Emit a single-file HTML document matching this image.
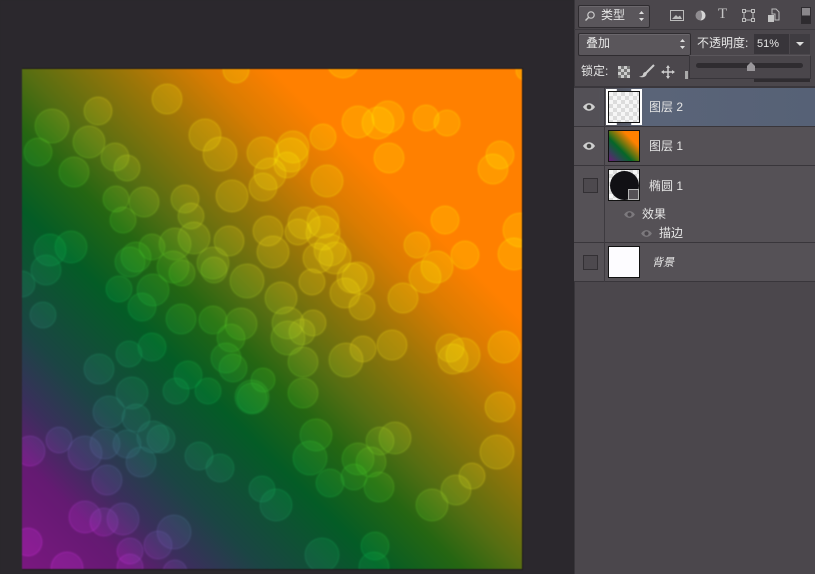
<!DOCTYPE html>
<html><head><meta charset="utf-8">
<style>
html,body{margin:0;padding:0;width:815px;height:574px;overflow:hidden;background:#2b282d}
body{position:relative;font-family:"Liberation Sans","Noto Sans CJK SC",sans-serif;color:#eee}
.abs,.abs *{box-sizing:border-box}
.abs{position:absolute}
#panel{position:absolute;left:574px;top:0;width:241px;height:574px;background:#4b474c;overflow:hidden}
.t{position:absolute;white-space:nowrap;font-size:12px;line-height:14px;color:#e6e6e6}
.row{position:absolute;left:0;width:241px;background:#555156;border-bottom:1px solid #39363b;box-sizing:border-box}
.thumb{position:absolute;left:34px;width:32px;height:32px;border:1px solid #111;box-sizing:border-box}
.chk{background-color:#f6f6f6;background-image:linear-gradient(45deg,#dcdcdc 25%,transparent 25%,transparent 75%,#dcdcdc 75%),linear-gradient(45deg,#dcdcdc 25%,transparent 25%,transparent 75%,#dcdcdc 75%);background-size:8px 8px;background-position:0 0,4px 4px}
.box{position:absolute;left:9px;width:13px;height:13px;border:1px solid #333034;background:#4d494e}
.dd{position:absolute;background:#5a565b;border:1px solid #2f2c30;border-radius:2px;box-shadow:inset 0 1px 0 #6b676c}
</style></head><body>
<svg class="abs" style="left:0;top:0;filter:blur(.4px)" width="574" height="574" viewBox="0 0 574 574">
<defs>
<linearGradient id="g" gradientUnits="userSpaceOnUse" x1="22" y1="569" x2="522" y2="69">
<stop offset="0" stop-color="#7a1880"/><stop offset=".11" stop-color="#641a72"/><stop offset=".17" stop-color="#3a2f5c"/><stop offset=".24" stop-color="#1b4544"/><stop offset=".36" stop-color="#045c26"/><stop offset=".44" stop-color="#256612"/><stop offset=".5" stop-color="#566e12"/><stop offset=".6" stop-color="#9c7608"/><stop offset=".68" stop-color="#da7c02"/><stop offset=".75" stop-color="#ff8000"/><stop offset="1" stop-color="#ff8000"/>
</linearGradient>
<clipPath id="c"><rect x="22" y="69" width="500" height="500"/></clipPath>
</defs>
<rect width="574" height="574" fill="#2b282d"/>
<rect x="22" y="68" width="501" height="502" fill="#1e1a1c"/>
<rect x="22" y="69" width="500" height="500" fill="url(#g)"/>
<g clip-path="url(#c)" style="mix-blend-mode:overlay" fill="#fff" fill-opacity=".19" stroke="#fff" stroke-opacity=".13" stroke-width="2">
<circle cx="167" cy="99" r="15"/><circle cx="98" cy="111" r="14"/><circle cx="52" cy="126" r="17"/><circle cx="38" cy="152" r="14"/><circle cx="89" cy="142" r="16"/><circle cx="115" cy="157" r="14"/><circle cx="127" cy="168" r="13"/><circle cx="74" cy="172" r="15"/><circle cx="205" cy="135" r="16"/><circle cx="220" cy="154" r="17"/><circle cx="236" cy="70" r="13"/><circle cx="263" cy="153" r="16"/><circle cx="270" cy="174" r="16"/><circle cx="263" cy="187" r="14"/><circle cx="232" cy="196" r="16"/><circle cx="116" cy="199" r="13"/><circle cx="144" cy="202" r="15"/><circle cx="123" cy="220" r="13"/><circle cx="185" cy="199" r="14"/><circle cx="191" cy="216" r="13"/><circle cx="229" cy="241" r="15"/><circle cx="268" cy="231" r="15"/><circle cx="273" cy="252" r="16"/><circle cx="194" cy="238" r="16"/><circle cx="175" cy="244" r="16"/><circle cx="152" cy="247" r="13"/><circle cx="130" cy="262" r="15"/><circle cx="136" cy="257" r="15"/><circle cx="50" cy="250" r="16"/><circle cx="71" cy="247" r="16"/><circle cx="46" cy="270" r="15"/><circle cx="22" cy="284" r="13"/><circle cx="213" cy="263" r="16"/><circle cx="214" cy="270" r="13"/><circle cx="247" cy="281" r="17"/><circle cx="182" cy="273" r="13"/><circle cx="173" cy="267" r="16"/><circle cx="153" cy="290" r="16"/><circle cx="119" cy="289" r="13"/><circle cx="142" cy="307" r="14"/><circle cx="43" cy="315" r="13"/><circle cx="281" cy="298" r="16"/><circle cx="181" cy="319" r="15"/><circle cx="213" cy="320" r="14"/><circle cx="241" cy="324" r="16"/><circle cx="231" cy="338" r="14"/>
<circle cx="99" cy="369" r="15"/><circle cx="129" cy="354" r="13"/><circle cx="152" cy="347" r="14"/><circle cx="188" cy="375" r="14"/><circle cx="176" cy="391" r="13"/><circle cx="208" cy="391" r="13"/><circle cx="226" cy="358" r="15"/><circle cx="233" cy="368" r="14"/><circle cx="263" cy="380" r="12"/><circle cx="252" cy="397" r="17"/><circle cx="252" cy="398" r="15"/><circle cx="132" cy="393" r="16"/><circle cx="109" cy="412" r="16"/><circle cx="136" cy="418" r="14"/><circle cx="153" cy="437" r="16"/><circle cx="161" cy="439" r="14"/><circle cx="127" cy="444" r="14"/><circle cx="105" cy="444" r="15"/><circle cx="85" cy="453" r="17"/><circle cx="59" cy="440" r="13"/><circle cx="30" cy="451" r="15"/><circle cx="141" cy="462" r="15"/><circle cx="107" cy="480" r="15"/><circle cx="199" cy="456" r="14"/><circle cx="220" cy="468" r="14"/><circle cx="262" cy="489" r="13"/><circle cx="276" cy="505" r="16"/><circle cx="85" cy="517" r="16"/><circle cx="104" cy="522" r="14"/><circle cx="123" cy="519" r="16"/><circle cx="174" cy="532" r="17"/><circle cx="158" cy="545" r="14"/><circle cx="130" cy="551" r="13"/><circle cx="130" cy="567" r="13"/><circle cx="175" cy="572" r="12"/><circle cx="67" cy="568" r="16"/><circle cx="28" cy="542" r="14"/>
<circle cx="343" cy="62" r="16"/><circle cx="358" cy="122" r="16"/><circle cx="388" cy="117" r="16"/><circle cx="378" cy="123" r="16"/><circle cx="426" cy="118" r="13"/><circle cx="447" cy="123" r="13"/><circle cx="323" cy="137" r="13"/><circle cx="389" cy="158" r="15"/><circle cx="293" cy="147" r="16"/><circle cx="291" cy="155" r="17"/><circle cx="287" cy="165" r="13"/><circle cx="327" cy="181" r="16"/><circle cx="500" cy="155" r="14"/><circle cx="493" cy="169" r="15"/><circle cx="525" cy="71" r="9"/><circle cx="445" cy="220" r="14"/><circle cx="417" cy="245" r="13"/><circle cx="465" cy="255" r="14"/><circle cx="437" cy="267" r="16"/><circle cx="425" cy="277" r="16"/><circle cx="403" cy="298" r="15"/><circle cx="520" cy="230" r="17"/><circle cx="514" cy="254" r="16"/><circle cx="304" cy="223" r="16"/><circle cx="323" cy="222" r="16"/><circle cx="323" cy="233" r="17"/><circle cx="298" cy="232" r="13"/><circle cx="318" cy="258" r="15"/><circle cx="330" cy="250" r="16"/><circle cx="335" cy="258" r="16"/><circle cx="312" cy="282" r="13"/><circle cx="352" cy="278" r="15"/><circle cx="358" cy="278" r="16"/><circle cx="345" cy="293" r="15"/><circle cx="362" cy="307" r="13"/>
<circle cx="313" cy="323" r="13"/><circle cx="302" cy="332" r="13"/><circle cx="288" cy="323" r="16"/><circle cx="288" cy="338" r="17"/><circle cx="303" cy="362" r="15"/><circle cx="303" cy="393" r="15"/><circle cx="346" cy="360" r="17"/><circle cx="363" cy="349" r="13"/><circle cx="392" cy="345" r="15"/><circle cx="450" cy="348" r="14"/><circle cx="453" cy="359" r="15"/><circle cx="463" cy="355" r="17"/><circle cx="504" cy="347" r="16"/><circle cx="500" cy="407" r="15"/><circle cx="497" cy="452" r="17"/><circle cx="472" cy="476" r="13"/><circle cx="456" cy="490" r="15"/><circle cx="432" cy="505" r="16"/><circle cx="395" cy="438" r="16"/><circle cx="380" cy="441" r="14"/><circle cx="371" cy="462" r="15"/><circle cx="358" cy="459" r="16"/><circle cx="354" cy="477" r="13"/><circle cx="379" cy="487" r="15"/><circle cx="330" cy="483" r="14"/><circle cx="316" cy="435" r="16"/><circle cx="310" cy="458" r="17"/><circle cx="375" cy="546" r="14"/><circle cx="374" cy="567" r="15"/><circle cx="322" cy="555" r="17"/>
</g>
</svg>

<div id="panel">
<div class="abs" style="left:0;top:0;width:1px;height:574px;background:#39363b"></div>
<!-- top row -->
<div class="dd" style="left:4px;top:5px;width:70px;height:21px"></div>
<svg class="abs" style="left:9px;top:10px" width="14" height="12" viewBox="0 0 14 12"><circle cx="8" cy="5" r="3.200" fill="none" stroke="#ccc" stroke-width="1.200"/><path d="M5.500 7.500 2.500 10.500" stroke="#ccc" stroke-width="1.400"/></svg>
<div class="t" style="left:27px;top:8px">类型</div>
<svg class="abs" style="left:64px;top:10px" width="7" height="12" viewBox="0 0 7 12"><path d="M3.500 1 6 4H1zM3.500 11 6 8H1z" fill="#ddd"/></svg>
<svg class="abs" style="left:96px;top:9px" width="14" height="13" viewBox="0 0 14 13"><rect x=".5" y="1.500" width="13" height="10" fill="none" stroke="#bbb"/><path d="M2 10 6 6l2 2 2-1.500 2 3.500z" fill="#bbb"/></svg>
<svg class="abs" style="left:120px;top:9px" width="13" height="13" viewBox="0 0 13 13"><circle cx="6.500" cy="6.500" r="5" fill="#8f8c90"/><path d="M6.500 1.500a5 5 0 0 1 0 10c2-3 2-7 0-10z" fill="#d6d6d6"/></svg>
<div class="t" style="left:144px;top:7px;font-family:'Liberation Serif',serif;font-size:15px;color:#c4c4c4">T</div>
<svg class="abs" style="left:168px;top:9px" width="13" height="13" viewBox="0 0 13 13"><rect x="2" y="2" width="9" height="9" fill="none" stroke="#bbb"/><path d="M.5.500h3v3h-3zM9.500.500h3v3h-3zM.5 9.500h3v3h-3zM9.500 9.500h3v3h-3z" fill="#4b474c" stroke="#bbb"/></svg>
<svg class="abs" style="left:193px;top:8px" width="14" height="15" viewBox="0 0 14 15"><path d="M5 1h4l3 3v8H8V6H5z" fill="#4b474c" stroke="#bbb"/><rect x="1" y="7" width="6" height="7" fill="#c4c4c4"/></svg>
<div class="abs" style="left:227px;top:7px;width:10px;height:17px;background:linear-gradient(#8a878b 0 50%,#2e2b2f 50%);border:1px solid #2f2c30"></div>
<div class="abs" style="left:0;top:29px;width:241px;height:1px;background:#3d3a3f"></div>
<!-- blend row -->
<div class="dd" style="left:4px;top:33px;width:111px;height:21px"></div>
<div class="t" style="left:12px;top:36px">叠加</div>
<svg class="abs" style="left:105px;top:38px" width="7" height="12" viewBox="0 0 7 12"><path d="M3.500 1 6 4H1zM3.500 11 6 8H1z" fill="#ddd"/></svg>
<div class="t" style="left:123px;top:36px">不透明度:</div>
<div class="abs" style="left:180px;top:34px;width:35px;height:20px;background:#38353a"></div>
<div class="t" style="left:183px;top:37px;font-size:11px">51%</div>
<div class="abs" style="left:216px;top:34px;width:20px;height:20px;background:#3f3c41"></div>
<svg class="abs" style="left:222px;top:42px" width="8" height="5" viewBox="0 0 8 5"><path d="M0 0h8L4 4z" fill="#ddd"/></svg>
<!-- lock row -->
<div class="t" style="left:7px;top:64px">锁定:</div>
<div class="abs" style="left:44px;top:66px;width:12px;height:12px;background-size:6px 6px;background-position:0 0,3px 3px;background-color:#ccc;background-image:linear-gradient(45deg,#777 25%,transparent 25%,transparent 75%,#777 75%),linear-gradient(45deg,#777 25%,transparent 25%,transparent 75%,#777 75%)"></div>
<svg class="abs" style="left:64px;top:64px" width="18" height="15" viewBox="0 0 18 15"><path d="M16 1 8 9" stroke="#ccc" stroke-width="2"/><path d="M8 8c-2 0-3 1-3 3-1 1-2 1.500-4 1.500 3 1.500 7 1 8-3z" fill="#ccc"/></svg>
<svg class="abs" style="left:87px;top:65px" width="14" height="14" viewBox="0 0 14 14"><path d="M7 1v12M1 7h12" stroke="#ccc" stroke-width="1.500"/><path d="M7 0 5 3h4zM7 14 5 11h4zM0 7l3-2v4zM14 7l-3-2v4z" fill="#ccc"/></svg>
<div class="abs" style="left:111px;top:71px;width:3px;height:8px;background:#aaa"></div>
<div class="abs" style="left:0;top:86px;width:241px;height:2px;background:#3a373c"></div>
<div class="abs" style="left:180px;top:79px;width:56px;height:3px;background:#2f2c30"></div>
<!-- slider popup -->
<div class="abs" style="left:115px;top:55px;width:122px;height:24px;background:#4a464b;border:1px solid #38353a;border-top-color:#5a565b"></div>
<div class="abs" style="left:122px;top:63px;width:107px;height:5px;background:#2f2c30;border-radius:3px"></div>
<svg class="abs" style="left:171px;top:62px" width="12" height="10" viewBox="0 0 12 10"><path d="M6 0 10 4v5H2V4z" fill="#9a979b"/></svg>

<!-- layers -->
<div class="row" style="top:88px;height:39px;background:linear-gradient(90deg,#535056 0,#535056 10%,#5a6478 30%,#566176 100%)"></div>
<div class="row" style="top:127px;height:39px"></div>
<div class="row" style="top:166px;height:77px"></div>
<div class="row" style="top:243px;height:39px"></div>
<div class="abs" style="left:30px;top:88px;width:1px;height:194px;background:#3d3a3f"></div>

<svg class="abs" style="left:8px;top:102px" width="14" height="10" viewBox="0 0 14 10"><path d="M1 5c3-5 9-5 12 0-3 5-9 5-12 0z" fill="#cfcfcf"/><circle cx="7" cy="5" r="2.300" fill="#444"/></svg>
<div class="abs" style="left:32px;top:89px;width:36px;height:36px;background:#fff;clip-path:polygon(0 0,30% 0,30% 100%,70% 100%,70% 0,100% 0,100% 100%,0 100%)"></div>
<div class="thumb chk" style="top:91px;border-color:#111"></div>
<div class="t" style="left:75px;top:100px">图层 2</div>

<svg class="abs" style="left:8px;top:141px" width="14" height="10" viewBox="0 0 14 10"><path d="M1 5c3-5 9-5 12 0-3 5-9 5-12 0z" fill="#cfcfcf"/><circle cx="7" cy="5" r="2.300" fill="#444"/></svg>
<div class="thumb" style="top:130px;background:linear-gradient(45deg,#6a1c78 0,#2a4a50 22%,#056628 38%,#5a7412 50%,#ff8000 74%)"></div>
<div class="t" style="left:75px;top:139px">图层 1</div>

<div class="box" style="top:178px"></div>
<div class="thumb chk" style="top:169px;overflow:hidden"><div class="abs" style="left:1px;top:1px;width:29px;height:29px;border-radius:50%;background:#111014"></div><div class="abs" style="left:19px;top:19px;width:11px;height:11px;background:#555156;border:1px solid #b8b8b8"></div></div>
<div class="t" style="left:75px;top:179px">椭圆 1</div>
<svg class="abs" style="left:49px;top:210px" width="13" height="9" viewBox="0 0 14 10"><path d="M1 5c3-5 9-5 12 0-3 5-9 5-12 0z" fill="#7c797d"/><circle cx="7" cy="5" r="2.300" fill="#4b474c"/></svg>
<div class="t" style="left:68px;top:207px">效果</div>
<svg class="abs" style="left:66px;top:229px" width="13" height="9" viewBox="0 0 14 10"><path d="M1 5c3-5 9-5 12 0-3 5-9 5-12 0z" fill="#7c797d"/><circle cx="7" cy="5" r="2.300" fill="#4b474c"/></svg>
<div class="t" style="left:85px;top:226px">描边</div>

<div class="box" style="top:255px"></div>
<div class="thumb" style="top:246px;background:#fdfcff"></div>
<div class="t" style="left:78px;top:256px;font-style:italic;font-size:11px">背景</div>
</div>
</body></html>
